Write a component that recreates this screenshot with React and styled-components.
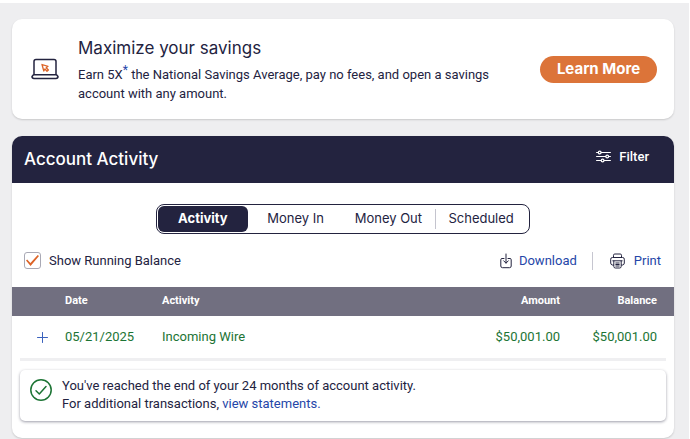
import React from "react";
import styled, { createGlobalStyle } from "styled-components";

const navy = "#23233f";
const blue = "#2546a8";
const green = "#1c7434";
const displayFont = 'Inter, "Liberation Sans", sans-serif';

const GlobalStyle = createGlobalStyle`
  * { box-sizing: border-box; }
  body {
    margin: 0;
    background: #fff;
    color: ${navy};
    font-family: Roboto, "Liberation Sans", sans-serif;
    font-size: 13px;
    line-height: 18px;
  }
  button { font: inherit; color: inherit; border: 0; padding: 0; background: none; cursor: pointer; }
  h2, p { margin: 0; }
`;

const Page = styled.main`
  display: flex;
  flex-direction: column;
  gap: 17px;
  min-height: calc(100vh - 3px);
  margin: 3px 1px 0 0;
  padding: 16px 15px 2px 12px;
  background: #eeeef0;
`;

const Card = styled.section`
  background: #fff;
  border-radius: 10px;
  box-shadow: 0 1px 2px rgba(0, 0, 0, 0.16);
`;

const Promo = styled(Card)`
  display: flex;
  align-items: center;
  min-height: 100px;
  padding: 0 17px 0 19px;
`;

const PromoIcon = styled.svg`
  flex: none;
  width: 28px;
  height: 22px;
  margin-right: 19px;
`;

const PromoCopy = styled.div`
  flex: 1;
  min-width: 0;
`;

const Title = styled.h2`
  font-family: ${displayFont};
  font-size: 17px;
  font-weight: ${(p) => p.$weight || 500};
  line-height: 24px;
`;

const PromoText = styled.p`
  max-width: 430px;
  margin-top: 5px;
  line-height: 19px;
`;

const Asterisk = styled.sup`
  color: ${blue};
  font-size: 12px;
  line-height: 0;
`;

const LearnMore = styled.button`
  && {
    flex: none;
    width: 117px;
    height: 27px;
    border-radius: 14px;
    background: #dc7439;
    color: #fff;
    font-family: ${displayFont};
    font-size: 15px;
    font-weight: 700;
  }
`;

const ActivityCard = styled(Card)`
  padding-bottom: 17px;
`;

const CardHeader = styled.header`
  display: flex;
  align-items: center;
  justify-content: space-between;
  height: 47px;
  padding: 0 25px 2px 12px;
  border-radius: 10px 10px 0 0;
  background: ${navy};
  color: #fff;
`;

const IconButton = styled.button`
  display: flex;
  align-items: center;
  gap: ${(p) => p.$gap}px;
`;

const FilterButton = styled(IconButton)`
  && { font-weight: 500; padding-bottom: 4px; }
`;

const Tabs = styled.div`
  display: grid;
  grid-template-columns: repeat(4, 1fr);
  width: 374px;
  height: 30px;
  margin: 21px auto 0;
  padding: 1px 1px 1px 0;
  border: 1px solid ${navy};
  border-radius: 8px;
  font-family: ${displayFont};
`;

const TabItem = styled.div`
  display: flex;
  align-items: center;
  border-left: 1px solid transparent;
  ${(p) => p.$divided && "border-image: linear-gradient(transparent 15%, #c4c4ce 15%, #c4c4ce 85%, transparent 85%) 1;"}
`;

const Tab = styled.button`
  && {
    flex: 1;
    height: 100%;
    margin-right: 2px;
    padding-bottom: 2px;
    border-radius: 6px;
    background: ${(p) => (p.$active ? navy : "transparent")};
    color: ${(p) => (p.$active ? "#fff" : navy)};
    font-weight: ${(p) => (p.$active ? 700 : 400)};
  }
`;

const Toolbar = styled.div`
  display: flex;
  align-items: center;
  justify-content: space-between;
  height: 53px;
  padding: 0 13px 0 12px;
`;

const CheckLabel = styled.label`
  display: flex;
  align-items: center;
  gap: 8px;
`;

const Checkbox = styled.input`
  display: grid;
  place-items: center;
  width: 17px;
  height: 17px;
  margin: 0;
  border: 1px solid #a9a9b5;
  border-radius: 3px;
  appearance: none;
  &:checked::before {
    content: "";
    width: 13px;
    height: 11px;
    background: #dc6428;
    clip-path: polygon(0 51%, 9% 41%, 34% 73%, 90% 0, 100% 9%, 35% 100%);
  }
`;

const Actions = styled.div`
  display: flex;
  align-items: center;
  height: 18px;
  color: ${blue};
`;

const Divider = styled.span`
  width: 1px;
  height: 18px;
  margin: 0 17px 0 15px;
  background: #c6c6d0;
`;

const LineIcon = styled.svg`
  flex: none;
  fill: none;
  stroke: currentColor;
  stroke-linecap: round;
  stroke-linejoin: round;
  color: ${(p) => p.$color || "inherit"};
`;

const Table = styled.table`
  width: 100%;
  table-layout: fixed;
  border-collapse: collapse;
`;

const HeadCell = styled.th`
  width: ${(p) => (p.$width ? `${p.$width}px` : "auto")};
  height: 29px;
  padding: 0 ${(p) => (p.$end ? 17 : 0)}px 1px 0;
  background: #716f80;
  color: #fff;
  font-size: 11px;
  font-weight: 700;
  text-align: ${(p) => p.$align || "left"};
`;

const Cell = styled.td`
  height: 42px;
  padding: 0 ${(p) => (p.$end ? 17 : 0)}px 0 0;
  color: ${green};
  text-align: ${(p) => p.$align || "left"};
`;

const ExpandButton = styled.button`
  && {
    display: flex;
    margin-left: 25px;
    color: #3b62bd;
  }
`;

const Rule = styled.hr`
  height: 3px;
  margin: 0 8px;
  border: 0;
  background: #efeff1;
`;

const Notice = styled.div`
  display: flex;
  gap: 10px;
  margin: 9px 8px 0;
  padding: 7px 10px 8px;
  border-radius: 5px;
  line-height: 18px;
  box-shadow: 0 1px 3px rgba(35, 35, 63, 0.45);
`;

const NoticeIcon = styled(LineIcon)`
  margin-top: 2px;
`;

const Link = styled.a`
  color: ${blue};
  text-decoration: none;
`;

const tabs = ["Activity", "Money In", "Money Out", "Scheduled"];
const rows = [
  { date: "05/21/2025", activity: "Incoming Wire", amount: "$50,001.00", balance: "$50,001.00" },
];

export default function App() {
  return (
    <>
      <GlobalStyle />
      <Page>
        <Promo>
          <PromoIcon viewBox="0 0 28 22" fill="none" aria-hidden="true">
            <path d="M3 16V3.5Q3 1.5 5 1.5H23Q25 1.5 25 3.5V16" stroke={navy} strokeWidth="1.5" />
            <path d="M2.5 16.8H25.5L27 18.6Q27 20.5 25 20.5H3Q1 20.5 1 18.6Z" stroke={navy} strokeWidth="1.5" strokeLinejoin="round" />
            <path d="M11 6.5L17 8.3L15.2 9.8L17.4 12L16 13.2L13.9 11L12.8 13Z" stroke="#dc6428" strokeWidth="1.3" strokeLinejoin="round" />
          </PromoIcon>
          <PromoCopy>
            <Title $weight={400}>Maximize your savings</Title>
            <PromoText>
              Earn 5X<Asterisk>*</Asterisk> the National Savings Average, pay no fees, and open a savings account with any amount.
            </PromoText>
          </PromoCopy>
          <LearnMore type="button">Learn More</LearnMore>
        </Promo>

        <ActivityCard>
          <CardHeader>
            <Title>Account Activity</Title>
            <FilterButton type="button" $gap={8}>
              <LineIcon width="15" height="13" viewBox="0 0 15 13" strokeWidth="1.2" aria-hidden="true">
                <path d="M.6 2.5H2.2M5.2 2.5H14.4M.6 6.5H9.7M12.7 6.5H14.4M.6 10.5H5.1M8.1 10.5H14.4" />
                <circle cx="3.7" cy="2.5" r="1.4" />
                <circle cx="11.2" cy="6.5" r="1.4" />
                <circle cx="6.6" cy="10.5" r="1.4" />
              </LineIcon>
              Filter
            </FilterButton>
          </CardHeader>

          <Tabs role="tablist">
            {tabs.map((name, i) => (
              <TabItem key={name} role="presentation" $divided={i === 3}>
                <Tab type="button" role="tab" aria-selected={i === 0} $active={i === 0}>{name}</Tab>
              </TabItem>
            ))}
          </Tabs>

          <Toolbar>
            <CheckLabel>
              <Checkbox type="checkbox" defaultChecked />
              Show Running Balance
            </CheckLabel>
            <Actions>
              <IconButton type="button" $gap={7}>
                <LineIcon width="12" height="16" viewBox="0 0 12 16" $color={navy} aria-hidden="true">
                  <path d="M4 5.5H2Q.8 5.5.8 6.7V13Q.8 14.7 2.5 14.7H9.5Q11.2 14.7 11.2 13V6.7Q11.2 5.5 10 5.5H8M6 1V10M3.7 7.8L6 10.2L8.3 7.8" />
                </LineIcon>
                Download
              </IconButton>
              <Divider />
              <IconButton type="button" $gap={9}>
                <LineIcon width="15" height="16" viewBox="0 0 15 16" $color={navy} aria-hidden="true">
                  <path d="M3.5 4.5V2.3Q3.5 1 4.8 1H10.2Q11.5 1 11.5 2.3V4.5M3.5 12H2.3Q.7 11.7.7 10V6.2Q.7 4.5 2.4 4.5H12.6Q14.3 4.5 14.3 6.2V10Q14.3 11.7 12.7 12H11.5M2.8 7.8H12.2M3.8 8V13.4Q3.8 15 5.3 15H9.7Q11.2 15 11.2 13.4V8M5.8 10H9.2M5.8 11.5H9.2M5.8 13H9.2" />
                </LineIcon>
                Print
              </IconButton>
            </Actions>
          </Toolbar>

          <Table>
            <thead>
              <tr>
                <HeadCell $width={53} aria-label="Details" />
                <HeadCell $width={97}>Date</HeadCell>
                <HeadCell>Activity</HeadCell>
                <HeadCell $width={97} $align="right">Amount</HeadCell>
                <HeadCell $width={114} $align="right" $end>Balance</HeadCell>
              </tr>
            </thead>
            <tbody>
              {rows.map((row) => (
                <tr key={row.date}>
                  <Cell>
                    <ExpandButton type="button" aria-label="Show details">
                      <LineIcon width="11" height="11" viewBox="0 0 11 11" aria-hidden="true">
                        <path d="M5.5.5V10.5M.5 5.5H10.5" />
                      </LineIcon>
                    </ExpandButton>
                  </Cell>
                  <Cell>{row.date}</Cell>
                  <Cell>{row.activity}</Cell>
                  <Cell $align="right">{row.amount}</Cell>
                  <Cell $align="right" $end>{row.balance}</Cell>
                </tr>
              ))}
            </tbody>
          </Table>
          <Rule />

          <Notice>
            <NoticeIcon width="22" height="22" viewBox="0 0 22 22" strokeWidth="1.5" $color={green} aria-hidden="true">
              <circle cx="11" cy="11" r="10.2" />
              <path d="M6 11.7L9.3 15L16 7.5" />
            </NoticeIcon>
            <div>
              <p>You've reached the end of your 24 months of account activity.</p>
              <p>For additional transactions, <Link href="#statements">view statements.</Link></p>
            </div>
          </Notice>
        </ActivityCard>
      </Page>
    </>
  );
}
